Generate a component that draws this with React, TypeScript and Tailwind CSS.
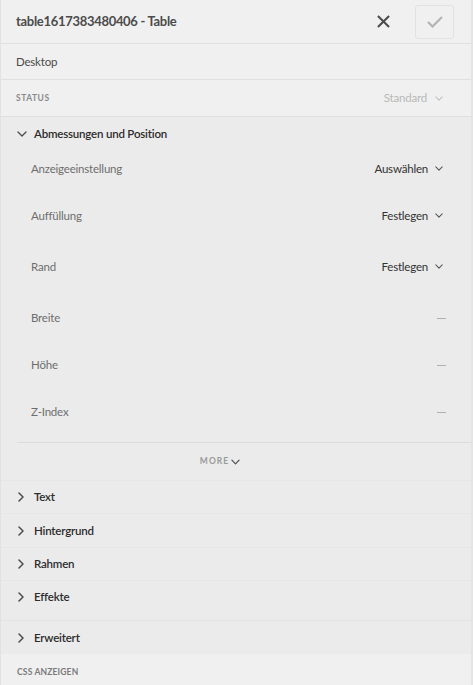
import React from "react";

const F = { fontFamily: "Lato, 'Open Sans', sans-serif" };

function ChevronDown({ className = "" }: { className?: string }) {
  return (
    <svg viewBox="0 0 10 6" className={className} fill="none" stroke="currentColor" strokeWidth="1.3" strokeLinecap="round" strokeLinejoin="round">
      <path d="M1 1l4 4 4-4" />
    </svg>
  );
}

function ChevronRight({ className = "" }: { className?: string }) {
  return (
    <svg viewBox="0 0 6 10" className={className} fill="none" stroke="currentColor" strokeWidth="1.5" strokeLinecap="round" strokeLinejoin="round">
      <path d="M1 1l4 4-4 4" />
    </svg>
  );
}

function Row({ label, value, h }: { label: string; value?: string; h: string }) {
  return (
    <div className={`flex items-start justify-between pl-[30px] pr-[28px] pt-[10px] ${h}`}>
      <span className="text-[11.5px] leading-[15px] tracking-[-0.2px] text-[#6e6e6e]">{label}</span>
      {value ? (
        <span className="flex items-center gap-[7px] text-[11.5px] leading-[15px] tracking-[-0.2px] text-[#323232]">
          {value}
          <ChevronDown className="w-[8px] h-[5px] text-[#555]" />
        </span>
      ) : (
        <span className="block w-[9px] h-px bg-[#b0b0b0] mt-[8px] -mr-[3px]" />
      )}
    </div>
  );
}

function Collapsed({ label, h }: { label: string; h: string }) {
  return (
    <div className={`flex items-center ${h} pl-[16px] border-t border-[#e6e6e6]`}>
      <ChevronRight className="w-[6px] h-[10px] text-[#4b4b4b] ml-[1px]" />
      <span className="ml-[10px] text-[11.5px] tracking-[-0.2px] font-semibold text-[#2c2c2c]">{label}</span>
    </div>
  );
}

export default function App() {
  return (
    <div style={F} className="w-[473px] h-[685px] bg-[#f0f0f0] border-l border-[#e2e2e2] border-r-2 border-r-[#e4e4e4] overflow-hidden flex flex-col">
      <div className="h-[44px] shrink-0 flex items-center pl-[15px] pr-[17px] border-b border-[#e0e0e0]">
        <span className="text-[13px] tracking-[-0.3px] font-bold text-[#4b4b4b] flex-1">table1617383480406 - Table</span>
        <svg viewBox="0 0 14 14" className="w-[13px] h-[13px] mr-[25px] text-[#4b4b4b]" fill="none" stroke="currentColor" strokeWidth="2.2" strokeLinecap="butt">
          <path d="M1 1l12 12M13 1L1 13" />
        </svg>
        <div className="w-[39px] h-[34px] rounded-[3px] border border-[#e2e2e2] flex items-center justify-center">
          <svg viewBox="0 0 16 12" className="w-[16px] h-[12px] text-[#b3b3b3]" fill="none" stroke="currentColor" strokeWidth="2.2" strokeLinejoin="miter">
            <path d="M1 6l4.5 4.5L15 1" />
          </svg>
        </div>
      </div>
      <div className="h-[36px] shrink-0 flex items-center pl-[15px] border-b border-[#e0e0e0]">
        <span className="text-[11.5px] tracking-[-0.2px] text-[#4b4b4b]">Desktop</span>
      </div>
      <div className="h-[37px] shrink-0 flex items-center justify-between pl-[15px] pr-[28px] border-b border-[#e0e0e0]">
        <span className="text-[8.5px] font-bold tracking-[0.06em] text-[#8a8a8a]">STATUS</span>
        <span className="flex items-center gap-[8px] text-[11.5px] tracking-[-0.2px] text-[#b8b8b8]">
          Standard
          <ChevronDown className="w-[8px] h-[5px] text-[#c0c0c0]" />
        </span>
      </div>
      <div className="bg-[#ebebeb] flex flex-col shrink-0">
        <div className="h-[34px] flex items-center pl-[16px]">
          <ChevronDown className="w-[10px] h-[6px] text-[#4b4b4b]" />
          <span className="ml-[7px] text-[11.5px] tracking-[-0.2px] font-semibold text-[#2c2c2c]">Abmessungen und Position</span>
        </div>
        <Row label="Anzeigeeinstellung" value="Auswählen" h="h-[47px]" />
        <Row label="Auffüllung" value="Festlegen" h="h-[51px]" />
        <Row label="Rand" value="Festlegen" h="h-[51px]" />
        <Row label="Breite" h="h-[47px]" />
        <Row label="Höhe" h="h-[47px]" />
        <Row label="Z-Index" h="h-[48px]" />
        <div className="ml-[16px] border-t border-[#dcdcdc] h-[38px] flex items-center justify-center pr-[48px]">
          <span className="flex items-center gap-[2px] text-[8.5px] font-bold tracking-[0.12em] text-[#9a9a9a]">
            MORE
            <ChevronDown className="w-[9px] h-[6px] text-[#4b4b4b]" />
          </span>
        </div>
        <Collapsed label="Text" h="h-[33px]" />
        <Collapsed label="Hintergrund" h="h-[34px]" />
        <Collapsed label="Rahmen" h="h-[33px]" />
        <Collapsed label="Effekte" h="h-[33px]" />
        <div className="h-[7px]" />
        <div className="border-t border-[#e3e3e3] h-[34px] flex items-center pl-[16px]">
          <ChevronRight className="w-[6px] h-[10px] text-[#4b4b4b] ml-[1px]" />
          <span className="ml-[10px] text-[11.5px] tracking-[-0.2px] font-semibold text-[#2c2c2c]">Erweitert</span>
        </div>
      </div>
      <div className="flex-1 flex items-center pt-[5px] pl-[16px] bg-[#f0f0f0]">
        <span className="text-[8.5px] font-bold tracking-[0.02em] text-[#7a7a7a]">CSS ANZEIGEN</span>
      </div>
    </div>
  );
}
